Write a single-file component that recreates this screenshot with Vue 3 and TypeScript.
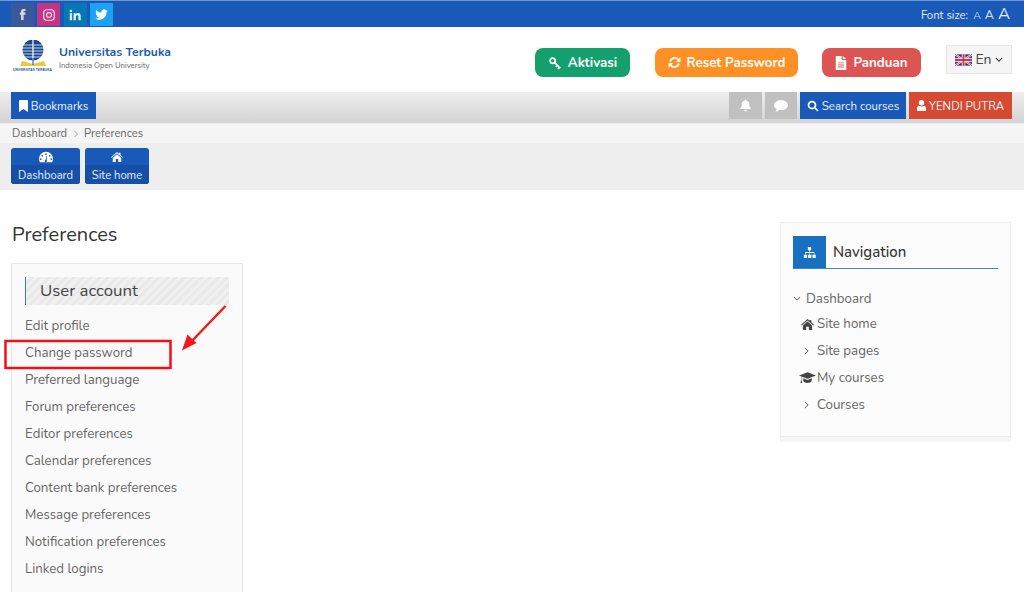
<script setup lang="ts">
const prefs: string[] = [
  'Edit profile', 'Change password', 'Preferred language', 'Forum preferences', 'Editor preferences',
  'Calendar preferences', 'Content bank preferences', 'Message preferences', 'Notification preferences', 'Linked logins',
]
</script>

<template>
  <div class="page">
    <div class="topbar">
      <div class="socials">
        <span class="soc fb"><svg viewBox="0 0 24 24" width="13" height="13"><path fill="#d5dbea" d="M14 8.500V6.600c0-.9.6-1.100 1-1.100h2.500V2H14c-3.600 0-4.600 2.400-4.600 4.400v2.100H7V12.500h2.400V22H14v-9.500h3l.5-4z"/></svg></span>
        <span class="soc ig"><svg viewBox="0 0 24 24" width="14" height="14" fill="none" stroke="#f3dcea" stroke-width="2"><rect x="3" y="3" width="18" height="18" rx="5"/><circle cx="12" cy="12" r="4.200"/><circle cx="17.300" cy="6.700" r=".8" fill="#f3dcea" stroke="none"/></svg></span>
        <span class="soc li"><svg viewBox="0 0 24 24" width="14" height="14"><path fill="#e4f0f8" d="M3 9h4v12H3zM5 3a2.200 2.200 0 110 4.400A2.200 2.200 0 015 3zM9.500 9h3.800v1.700c.6-1 1.900-2 3.800-2 4 0 4.700 2.600 4.700 6V21h-4v-5.500c0-1.400 0-3.100-1.900-3.100s-2.400 1.500-2.400 3V21h-4z"/></svg></span>
        <span class="soc tw"><svg viewBox="0 0 24 24" width="15" height="15"><path fill="#fff" d="M22 5.900c-.7.300-1.500.5-2.400.6.900-.5 1.500-1.300 1.800-2.300-.8.500-1.700.8-2.600 1a4.100 4.100 0 00-7 3.700C8.400 8.700 5.400 7.100 3.400 4.600c-1.100 1.900-.5 4.300 1.300 5.500-.7 0-1.300-.2-1.900-.5 0 2 1.400 3.700 3.300 4.100-.6.200-1.200.2-1.900.1.500 1.600 2 2.800 3.800 2.800A8.300 8.300 0 012 18.300 11.600 11.600 0 0020 8c.8-.6 1.500-1.300 2-2.100z"/></svg></span>
      </div>
      <div class="fontsize">
        <span>Font size:</span>
        <span class="a1">A</span><span class="a2">A</span><span class="a3">A</span>
      </div>
    </div>

    <header class="header">
      <div class="brand">
        <div class="logo">
          <svg viewBox="0 0 42 28" width="42" height="28">
            <circle cx="21" cy="10" r="10.500" fill="#17478f"/>
            <g stroke="#fff" stroke-width=".8">
              <path d="M11 5h20M10.500 8h21M10.500 11h21M11 14h20M13 17h16"/>
            </g>
            <path d="M21 0v21" stroke="#fff" stroke-width="1.200"/>
            <path d="M10 21l11 3 11-3 2 5H8z" fill="#e9c93c"/>
            <path d="M21 18v7" stroke="#17478f" stroke-width="1"/>
          </svg>
          <span class="logotext">UNIVERSITAS TERBUKA</span>
        </div>
        <div class="brandtext">
          <div class="bname">Universitas Terbuka</div>
          <div class="bsub">Indonesia Open University</div>
        </div>
      </div>
      <div class="actions">
        <a class="pill green">
          <svg viewBox="0 0 24 24" width="14" height="14" fill="none" stroke="#fff" stroke-width="3"><circle cx="8" cy="8" r="4.500"/><path d="M11.500 11.500L21 21M16 16l-2.500 2.500M19.500 19.500L17 22"/></svg>
          Aktivasi
        </a>
        <a class="pill orange">
          <svg viewBox="0 0 24 24" width="13" height="13" fill="none" stroke="#fff" stroke-width="3.400"><path d="M4 10a8.500 8.500 0 0115-3l2 2"/><path d="M20 14a8.500 8.500 0 01-15 3l-2-2"/><path fill="#fff" stroke="none" d="M23 2.500V11h-8.500zM1 21.500V13h8.500z"/></svg>
          Reset Password
        </a>
        <a class="pill red">
          <svg viewBox="0 0 20 24" width="12" height="14"><path fill="#fff" fill-rule="evenodd" d="M1 0h10v7h8v17H1zM13 0l6 5h-6zM5 11v1.600h10V11zM5 14.500v1.600h10v-1.600zM5 18v1.600h10V18z"/></svg>
          Panduan
        </a>
        <div class="lang">
          <svg viewBox="0 0 60 40" width="17" height="12"><rect width="60" height="40" fill="#2b3f86"/><path d="M0 0l60 40M60 0L0 40" stroke="#fff" stroke-width="7"/><path d="M0 0l60 40M60 0L0 40" stroke="#d2304a" stroke-width="3"/><path d="M30 0v40M0 20h60" stroke="#fff" stroke-width="12"/><path d="M30 0v40M0 20h60" stroke="#d2304a" stroke-width="7"/></svg>
          <span>En</span>
          <svg viewBox="0 0 10 6" width="8" height="5" fill="none" stroke="#444" stroke-width="1.400"><path d="M1 1l4 4 4-4"/></svg>
        </div>
      </div>
    </header>

    <nav class="navbar">
      <a class="navbtn blue">
        <svg viewBox="0 0 12 16" width="9" height="12"><path fill="#fff" d="M1 0h10a1 1 0 011 1v15l-6-4-6 4V1a1 1 0 011-1z"/></svg>
        Bookmarks
      </a>
      <div class="navright">
        <a class="graybtn bell">
          <svg viewBox="0 0 24 24" width="13" height="13"><path fill="#fff" d="M12 1a2 2 0 012 2c3.500.8 5 3.600 5 7 0 4 1 5.500 3 7.500v1H2v-1c2-2 3-3.500 3-7.500 0-3.400 1.500-6.200 5-7a2 2 0 012-2zM9.500 20.500h5a2.500 2.500 0 01-5 0z"/></svg>
        </a>
        <a class="graybtn chat">
          <svg viewBox="0 0 24 20" width="14" height="12"><path fill="#fff" d="M12 0c6.600 0 12 3.600 12 8.500S18.600 17 12 17c-1 0-2-.1-2.900-.3C7.500 18.200 5 19.500 2.500 19.500c1.200-1.200 2-2.700 2.200-4.300C1.800 13.600 0 11.200 0 8.500 0 3.600 5.400 0 12 0z"/></svg>
        </a>
        <a class="navbtn blue search">
          <svg viewBox="0 0 24 24" width="12" height="12" fill="none" stroke="#fff" stroke-width="3.500"><circle cx="10" cy="10" r="7"/><path d="M15.500 15.500L22 22"/></svg>
          Search courses
        </a>
        <a class="navbtn orangered">
          <svg viewBox="0 0 20 24" width="9" height="11"><path fill="#fff" d="M10 0a6 6 0 110 12 6 6 0 010-12zM4 12.500c1.500 1.200 3.500 1.800 6 1.800s4.500-.6 6-1.800c2.500.5 4 2.800 4 6V22a2 2 0 01-2 2H2a2 2 0 01-2-2v-3.500c0-3.200 1.500-5.500 4-6z"/></svg>
          YENDI PUTRA
        </a>
      </div>
    </nav>

    <div class="crumbs">
      <span>Dashboard</span>
      <svg viewBox="0 0 8 10" width="6" height="8" fill="none" stroke="#888" stroke-width="1"><path d="M2 1l4 4-4 4"/></svg>
      <span>Preferences</span>
    </div>

    <div class="quick">
      <a class="qbtn">
        <span class="qicon">
          <svg viewBox="0 0 24 20" width="14" height="12"><path fill="#fff" fill-rule="evenodd" d="M12 1a12 12 0 00-12 12c0 2.200.6 4.300 1.600 6h20.800c1-1.700 1.600-3.800 1.600-6A12 12 0 0012 1zM12 3.500a1.500 1.500 0 110 3 1.500 1.500 0 010-3zM5.500 6.500a1.500 1.500 0 110 3 1.500 1.500 0 010-3zM18.500 6.500a1.500 1.500 0 110 3 1.500 1.500 0 010-3zM3 12a1.500 1.500 0 110 3 1.500 1.500 0 010-3zM21 12a1.500 1.500 0 110 3 1.500 1.500 0 010-3zM13.200 8l.8.300-1 6.700a2 2 0 11-1.700-.300z"/></svg>
        </span>
        <span class="qlabel">Dashboard</span>
      </a>
      <a class="qbtn">
        <span class="qicon">
          <svg viewBox="0 0 24 20" width="12" height="10"><path fill="#fff" d="M12 0l4 3.400V1.500h3v4.500l5 4.300-1.300 1.400L12 2.500 1.300 11.700 0 10.300zM12 4.500l8.500 7.300V20h-6v-6h-5v6h-6v-8.200z"/></svg>
        </span>
        <span class="qlabel">Site home</span>
      </a>
    </div>

    <main class="main">
      <section class="left">
        <h1 class="title">Preferences</h1>
        <div class="card">
          <div class="cardhead">User account</div>
          <ul class="prefs">
            <li v-for="p in prefs" :key="p">{{ p }}</li>
          </ul>
        </div>
      </section>

      <aside class="navblock">
        <div class="nbhead">
          <span class="nbicon">
            <svg viewBox="0 0 24 20" width="13" height="11"><path fill="#fff" d="M9 0h6v6h-2v3h8v5h2.500v6h-6v-6H20v-3h-7v3h2.500v6h-6v-6H12v-3H5v3h2.500v6h-6v-6H4V9h8V6H9z" /></svg>
          </span>
          <span class="nbtitle">Navigation</span>
        </div>
        <ul class="tree">
          <li class="root">
            <svg viewBox="0 0 10 6" width="8" height="5" fill="none" stroke="#555" stroke-width="1.200"><path d="M1 1l4 4 4-4"/></svg>
            <span>Dashboard</span>
          </li>
          <li class="home">
            <svg viewBox="0 0 24 20" width="13" height="11"><path fill="#444" d="M12 0l4 3.400V1.500h3v4.500l5 4.300-1.300 1.400L12 2.500 1.300 11.700 0 10.300zM12 4.500l8.500 7.300V20h-6v-6h-5v6h-6v-8.200z"/></svg>
            <span>Site home</span>
          </li>
          <li class="chev">
            <svg viewBox="0 0 6 10" width="5" height="8" fill="none" stroke="#555" stroke-width="1.200"><path d="M1 1l4 4-4 4"/></svg>
            <span>Site pages</span>
          </li>
          <li class="grad">
            <svg viewBox="0 0 24 16" width="17" height="12"><path fill="#444" d="M12 0l12 4.500L12 9 3.500 5.800v4.400c.5.300.5 1 .1 1.300L4.500 15H2l.9-3.500c-.4-.3-.4-1 .1-1.300V5.400L0 4.500zM6 8.500l6 2.300 6-2.300V12c0 1.800-2.700 3-6 3s-6-1.200-6-3z"/></svg>
            <span>My courses</span>
          </li>
          <li class="chev">
            <svg viewBox="0 0 6 10" width="5" height="8" fill="none" stroke="#555" stroke-width="1.200"><path d="M1 1l4 4-4 4"/></svg>
            <span>Courses</span>
          </li>
        </ul>
      </aside>
    </main>

    <svg class="annot" viewBox="0 0 1024 592" width="1024" height="592">
      <rect x="5.500" y="341" width="165" height="27" fill="none" stroke="#f40f14" stroke-width="2.500"/>
      <path d="M225.500 306L190 343" stroke="#f01818" stroke-width="2.400" fill="none"/>
      <path d="M182 350.500l5.500-16 9 8.500z" fill="#f01818"/>
    </svg>
  </div>
</template>

<style>
html, body { margin: 0; background: #fff; overflow: hidden; }
</style>

<style scoped>
.page {
  position: relative;
  width: 1024px;
  height: 592px;
  overflow: hidden;
  font-family: "Nunito", "Open Sans", "Noto Sans", sans-serif;
  color: #555;
  font-size: 13px;
  background: #fff;
}
.topbar {
  height: 26px;
  background: #195ab9;
  border-top: 1px solid #6f97d3;
  display: flex;
  align-items: center;
  justify-content: space-between;
  padding: 0 12px 0 11px;
}
.socials { display: flex; gap: 3.400px; margin-top: 1px; }
.soc { width: 23px; height: 23px; display: flex; align-items: center; justify-content: center; }
.fb { background: #3b5998; }
.ig { background: #c13584; }
.li { background: #0877b5; }
.tw { background: #1da1f2; }
.fontsize { display: flex; align-items: baseline; gap: 4px; color: #e4ecf8; font-size: 11.300px; margin-right: 2px; margin-top: -2px; }
.a1 { font-size: 10.500px; color: #c7d7ef; margin-left: 1px; }
.a2 { font-size: 12.500px; color: #d6e2f3; }
.a3 { font-size: 16.500px; color: #e8eff9; }

.header {
  height: 65px;
  display: flex;
  align-items: flex-start;
  justify-content: space-between;
  padding: 0 12px;
}
.brand { display: flex; align-items: flex-start; padding-top: 13px; }
.logo { width: 41px; display: flex; flex-direction: column; align-items: center; }
.logotext { font-size: 3.300px; font-weight: 700; color: #2b5aa3; white-space: nowrap; line-height: 5px; margin-top: 0; font-family: "Liberation Sans", sans-serif; }
.brandtext { margin-left: 6px; margin-top: 4px; }
.bname { color: #1c5bb0; font-weight: 700; font-size: 12.200px; line-height: 16px; white-space: nowrap; }
.bsub { color: #666; font-size: 7.700px; line-height: 10px; white-space: nowrap; margin-top: 1px; }
.actions { display: flex; align-items: flex-start; padding-top: 21px; }
.pill {
  height: 29px;
  border-radius: 8px;
  color: #fff;
  font-weight: 700;
  font-size: 13.300px;
  display: flex;
  align-items: center;
  justify-content: center;
  gap: 6px;
  box-sizing: border-box;
}
.green { width: 95px; background: #13a06c; }
.orange { width: 143px; background: #ff9026; margin-left: 25px; }
.red { width: 99px; background: #dc5552; margin-left: 24px; }
.lang {
  width: 66px;
  height: 29px;
  margin-left: 25px;
  margin-top: -3px;
  background: #f5f5f5;
  border: 1px solid #e6e6e6;
  box-sizing: border-box;
  display: flex;
  align-items: center;
  justify-content: center;
  gap: 3px;
  color: #444;
  font-size: 14px;
}

.navbar {
  height: 32px;
  background: linear-gradient(#eeeeee, #d3d3d3);
  border-bottom: 1px solid #ececec;
  box-sizing: border-box;
  display: flex;
  align-items: flex-start;
  justify-content: space-between;
  padding: 0 12px 0 11px;
}
.navright { display: flex; gap: 3px; }
.navbtn {
  height: 27px;
  display: flex;
  align-items: center;
  gap: 3px;
  color: #e8eff9;
  font-size: 11.500px;
  white-space: nowrap;
  box-sizing: border-box;
}
.blue { background: #195ab9; width: 85px; justify-content: center; }
.search { width: 106px; }
.orangered { background: #d64a31; width: 103px; justify-content: center; }
.graybtn { height: 27px; background: #c0c0c0; display: flex; align-items: center; justify-content: center; }
.bell { width: 33px; }
.chat { width: 32px; }

.crumbs {
  height: 19px;
  background: #f5f5f5;
  display: flex;
  align-items: center;
  gap: 5.500px;
  padding: 0 0 0 12px;
  box-sizing: border-box;
  font-size: 11.200px;
  color: #666;
}
.quick {
  height: 47px;
  background: #eeeeee;
  display: flex;
  gap: 5px;
  padding: 5px 11px 0;
  box-sizing: border-box;
}
.qbtn {
  width: 69px;
  height: 36px;
  border-radius: 3px;
  overflow: hidden;
  display: flex;
  flex-direction: column;
  background: #195ab9;
  color: #eaf0fa;
  font-size: 11.200px;
}
.qbtn + .qbtn { width: 64px; }
.qicon { height: 17px; display: flex; align-items: center; justify-content: center; padding-top: 1px; box-sizing: border-box; }
.qlabel { flex: 1; background: #154fa8; display: flex; align-items: center; justify-content: center; white-space: nowrap; padding-top: 1px; }

.main {
  display: flex;
  justify-content: space-between;
  align-items: flex-start;
  padding: 0 13px 0 11px;
}
.left { width: 232px; }
.title {
  margin: 32px 0 15px 1px;
  font-size: 20px;
  line-height: 26px;
  font-weight: 400;
  color: #333;
  white-space: nowrap;
}
.card {
  background: #fafafa;
  border: 1px solid #e6e6e6;
  height: 340px;
  box-sizing: border-box;
  padding: 13px 13px 0;
}
.cardhead {
  height: 28px;
  border-left: 1px solid #3d75c4;
  padding-left: 14px;
  font-size: 16.800px;
  line-height: 28px;
  color: #444;
  background: repeating-linear-gradient(135deg, #f0f0f0 0 3px, #e9e9e9 3px 6px);
  border-radius: 0 2px 2px 0;
}
.prefs { list-style: none; margin: 8px 0 0; padding: 0; }
.prefs li {
  height: 27px;
  line-height: 27px;
  font-size: 13.250px;
  color: #666;
  white-space: nowrap;
}
.navblock {
  width: 231px;
  height: 215px;
  margin-top: 32px;
  background: #fcfcfc;
  border: 1px solid #ececec;
  box-shadow: 0 5px 0 #f6f6f6;
  box-sizing: border-box;
  padding: 13px 12px 0;
}
.nbhead { height: 32px; display: flex; align-items: center; border-bottom: 1.500px solid #3d84d2; }
.nbicon { width: 33px; height: 32px; background: #1a70c0; display: flex; align-items: center; justify-content: center; }
.nbtitle { margin-left: 7px; font-size: 15px; color: #333; font-weight: 500; }
.tree { list-style: none; margin: 17.500px 0 0; padding: 0; color: #666; font-size: 13.300px; }
.tree li { display: flex; align-items: center; height: 27px; white-space: nowrap; }
.root { height: 24px !important; }
.root svg { margin-right: 5px; }
.home { padding-left: 8px; gap: 3px; }
.chev { padding-left: 11px; }
.chev svg { margin-right: 8px; }
.grad { padding-left: 6px; gap: 1px; }
.annot { position: absolute; left: 0; top: 0; pointer-events: none; }
</style>
